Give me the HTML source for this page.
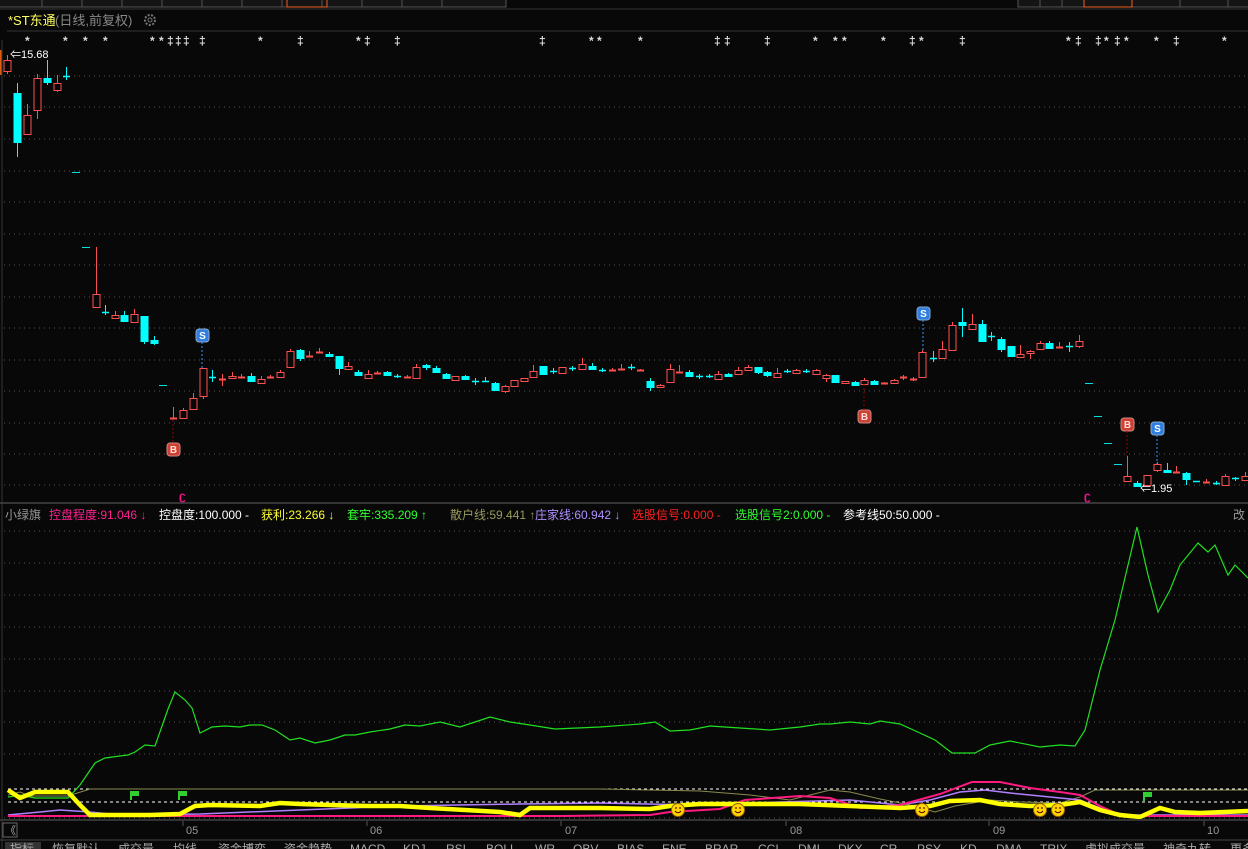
<!DOCTYPE html>
<html><head><meta charset="utf-8"><style>
html,body{margin:0;padding:0;background:#080808;}
body{width:1248px;height:849px;overflow:hidden;position:relative;font-family:"Liberation Sans","Noto Sans CJK SC",sans-serif;}
svg{position:absolute;left:0;top:0;}
</style></head><body>
<svg id="s" width="1248" height="849" xmlns="http://www.w3.org/2000/svg" font-family="Liberation Sans, Noto Sans CJK SC, sans-serif">
<rect width="1248" height="849" fill="#080808"/>
<g stroke="#555" fill="#141414">
<rect x="-2" y="-10" width="44" height="17"/><rect x="42" y="-10" width="40" height="17"/><rect x="82" y="-10" width="40" height="17"/><rect x="122" y="-10" width="40" height="17"/><rect x="162" y="-10" width="40" height="17"/><rect x="202" y="-10" width="40" height="17"/>
<rect x="242" y="-10" width="40" height="17"/><rect x="282" y="-10" width="40" height="17"/><rect x="322" y="-10" width="40" height="17"/><rect x="362" y="-10" width="40" height="17"/><rect x="402" y="-10" width="40" height="17"/><rect x="442" y="-10" width="64" height="17"/>
<rect x="1018" y="-10" width="22" height="17"/><rect x="1040" y="-10" width="22" height="17"/><rect x="1062" y="-10" width="22" height="17"/><rect x="1084" y="-10" width="48" height="17"/><rect x="1132" y="-10" width="48" height="17"/><rect x="1180" y="-10" width="48" height="17"/><rect x="1228" y="-10" width="30" height="17"/>
</g>
<rect x="287" y="-10" width="40" height="17" fill="none" stroke="#f06020"/>
<rect x="1084" y="-10" width="48" height="17" fill="none" stroke="#f06020"/>
<line x1="0" y1="9" x2="1248" y2="9" stroke="#333"/>
<text x="8" y="25" font-size="13" fill="#ffff60">*ST东通</text>
<text x="55" y="25" font-size="13" fill="#888">(日线,前复权)</text>
<circle cx="150" cy="20" r="5" fill="none" stroke="#777" stroke-width="2" stroke-dasharray="2 1.5"/>
<circle cx="150" cy="20" r="2" fill="none" stroke="#777"/>
<line x1="7" y1="31" x2="1248" y2="31" stroke="#333"/>
<rect x="0" y="50" width="2" height="25" fill="#e05a10"/>
<line x1="2" y1="40" x2="2" y2="849" stroke="#333"/>
<g id="grid" stroke="#555" stroke-dasharray="1 4"></g>
<g id="stars" fill="#ddd" font-size="12" font-weight="bold"></g>
<g id="cand"></g>
<text x="10" y="58" font-size="11" fill="#fff">⇐15.68</text>
<text x="1140" y="492" font-size="11" fill="#fff">⇐1.95</text>
<g font-size="10" font-weight="bold" text-anchor="middle">
<rect x="196" y="329" width="13" height="13" rx="3" fill="#2f7fe0" stroke="#8ac"/><text x="202.5" y="339" fill="#fff">S</text>
<line x1="202" y1="342" x2="202" y2="368" stroke="#3a8fff" stroke-dasharray="2 2"/>
<rect x="167" y="443" width="13" height="13" rx="3" fill="#d04030" stroke="#c88"/><text x="173.5" y="453" fill="#fdd">B</text>
<line x1="173" y1="420" x2="173" y2="443" stroke="#900" stroke-dasharray="2 2"/>
<rect x="917" y="307" width="13" height="13" rx="3" fill="#2f7fe0" stroke="#8ac"/><text x="923.5" y="317" fill="#fff">S</text>
<line x1="923" y1="320" x2="923" y2="352" stroke="#3a8fff" stroke-dasharray="2 2"/>
<rect x="858" y="410" width="13" height="13" rx="3" fill="#d04030" stroke="#c88"/><text x="864.5" y="420" fill="#fdd">B</text>
<line x1="864" y1="384" x2="864" y2="410" stroke="#900" stroke-dasharray="2 2"/>
<rect x="1121" y="418" width="13" height="13" rx="3" fill="#d04030" stroke="#c88"/><text x="1127.5" y="428" fill="#fdd">B</text>
<line x1="1127" y1="431" x2="1127" y2="456" stroke="#900" stroke-dasharray="2 2"/>
<rect x="1151" y="422" width="13" height="13" rx="3" fill="#2f7fe0" stroke="#8ac"/><text x="1157.5" y="432" fill="#fff">S</text>
<line x1="1157" y1="435" x2="1157" y2="464" stroke="#3a8fff" stroke-dasharray="2 2"/>
</g>
<text x="179" y="500" font-size="12" font-weight="bold" fill="#ff1090">ʗ</text>
<text x="1084" y="500" font-size="12" font-weight="bold" fill="#ff1090">ʗ</text>
<line x1="0" y1="503" x2="1248" y2="503" stroke="#444" stroke-width="1.5"/>
<text y="519" font-size="12">
<tspan x="5" fill="#999">小绿旗</tspan>
<tspan x="49" fill="#ff2090">控盘程度:91.046 ↓</tspan>
<tspan x="159" fill="#fff">控盘度:100.000 -</tspan>
<tspan x="261" fill="#ffff30">获利:23.266 ↓</tspan>
<tspan x="347" fill="#30ff30">套牢:335.209 ↑</tspan>
<tspan x="450" fill="#9a9a60">散户线:59.441 ↑</tspan>
<tspan x="535" fill="#b090ff">庄家线:60.942 ↓</tspan>
<tspan x="632" fill="#ff2020">选股信号:0.000 -</tspan>
<tspan x="735" fill="#30ff30">选股信号2:0.000 -</tspan>
<tspan x="843" fill="#fff">参考线50:50.000 -</tspan>
<tspan x="1233" fill="#999">改</tspan>
</text>
<g id="grid2" stroke="#555" stroke-dasharray="1 4"></g>
<line x1="8" y1="789" x2="1248" y2="789" stroke="#fff" stroke-dasharray="3 3"/>
<line x1="8" y1="802" x2="1248" y2="802" stroke="#fff" stroke-dasharray="3 3"/>
<polyline fill="none" stroke="#8a8a50" stroke-width="1" points="8,795 20,792 30,796 68,796 90,789 600,789 650,790 700,791 750,795 790,800 830,790 850,792 880,799 910,805 935,812 955,806 990,800 1020,802 1060,803 1080,797 1095,790 1248,790"/>
<polyline fill="none" stroke="#20e020" stroke-width="1.2" points="8,797 20,795 35,798 68,798 80,785 95,763 105,758 120,756 128,755 135,752 145,745 155,746 168,709 175,692 185,700 192,708 200,733 212,727 225,726 240,727 250,725 262,725 275,730 290,740 300,738 315,743 330,740 345,735 355,735 370,732 390,729 405,725 420,726 440,722 460,727 475,722 490,717 510,722 530,725 555,729 600,727 640,724 655,722 670,731 690,730 710,726 740,728 770,730 800,727 820,724 830,724 850,722 870,724 880,721 900,724 920,733 935,740 952,753 975,753 990,745 1010,741 1040,747 1060,745 1075,746 1085,730 1100,670 1115,620 1137,527 1148,575 1158,612 1170,590 1180,565 1198,543 1208,552 1215,545 1228,575 1235,565 1248,578"/>
<polyline fill="none" stroke="#b080ff" stroke-width="1.5" points="8,815 40,812 60,810 90,812 120,815 200,814 300,810 400,806 520,804 600,803 700,805 780,802 850,800 900,805 930,800 960,792 985,790 1010,793 1040,796 1080,800 1110,812 1130,815 1248,815"/>
<polyline fill="none" stroke="#ff1a80" stroke-width="2" points="8,816 300,816 518,816 560,816 650,815 670,812 720,809 745,800 800,796 830,798 860,808 900,805 940,794 972,782 1000,782 1030,788 1060,792 1080,795 1100,806 1120,815 1140,816 1248,816"/>
<polyline fill="none" stroke="#ffff00" stroke-width="4.5" points="8,790 20,798 35,792 68,792 80,805 90,815 130,815 150,815 180,814 195,806 210,805 260,806 280,803 300,804 330,805 370,806 400,806 430,808 500,812 520,815 530,808 600,808 650,809 670,806 700,804 800,804 850,806 900,808 930,806 950,801 980,800 1000,804 1030,806 1060,805 1080,802 1100,810 1120,815 1140,817 1160,808 1175,812 1200,813 1248,811"/>
<g fill="#30d030"><rect x="130" y="791" width="2" height="9"/><rect x="132" y="791" width="7" height="5"/><rect x="178" y="791" width="2" height="9"/><rect x="180" y="791" width="7" height="5"/><rect x="1143" y="792" width="2" height="9"/><rect x="1145" y="792" width="7" height="5"/></g>
<g id="smile"></g>
<line x1="0" y1="820" x2="1248" y2="820" stroke="#333" stroke-width="2"/>
<rect x="3" y="823" width="14" height="14" fill="none" stroke="#666"/>
<text x="5" y="834" font-size="11" fill="#aaa">《</text>
<g font-size="11" fill="#999"><text x="186" y="834">05</text><text x="370" y="834">06</text><text x="565" y="834">07</text><text x="790" y="834">08</text><text x="993" y="834">09</text><text x="1207" y="834">10</text></g>
<g stroke="#555"><line x1="183" y1="821" x2="183" y2="826"/><line x1="367" y1="821" x2="367" y2="826"/><line x1="561" y1="821" x2="561" y2="826"/><line x1="786" y1="821" x2="786" y2="826"/><line x1="989" y1="821" x2="989" y2="826"/><line x1="1204" y1="821" x2="1204" y2="826"/></g>
<line x1="0" y1="840" x2="1248" y2="840" stroke="#444"/>
<rect x="5" y="842" width="36" height="10" fill="#333"/>
<text y="853" font-size="12" fill="#aaa">
<tspan x="10">指标</tspan><tspan x="52">恢复默认</tspan><tspan x="118">成交量</tspan><tspan x="173">均线</tspan><tspan x="218">资金博弈</tspan><tspan x="284">资金趋势</tspan><tspan x="350">MACD</tspan><tspan x="403">KDJ</tspan><tspan x="446">RSI</tspan><tspan x="486">BOLL</tspan><tspan x="535">WR</tspan><tspan x="573">OBV</tspan><tspan x="617">BIAS</tspan><tspan x="662">ENE</tspan><tspan x="705">BRAR</tspan><tspan x="758">CCI</tspan><tspan x="798">DMI</tspan><tspan x="838">DKX</tspan><tspan x="880">CR</tspan><tspan x="917">PSY</tspan><tspan x="960">KD</tspan><tspan x="996">DMA</tspan><tspan x="1040">TRIX</tspan><tspan x="1085">虚拟成交量</tspan><tspan x="1163">神奇九转</tspan><tspan x="1230">更多</tspan>
</text>
</svg>
<script>
var NS="http://www.w3.org/2000/svg";
function el(p,t,a){var e=document.createElementNS(NS,t);for(var k in a)e.setAttribute(k,a[k]);p.appendChild(e);return e;}
var g=document.getElementById('grid');
[76,107,139,171,202,234,265,297,328,360,391,423,454,485].forEach(function(y){el(g,'line',{x1:4,y1:y,x2:1248,y2:y});});
var g2=document.getElementById('grid2');
[531,563,595,627,659,691,722,754,818].forEach(function(y){el(g2,'line',{x1:4,y1:y,x2:1248,y2:y});});
var st=document.getElementById('stars');
[[28,'*'],[66,'*'],[86,'*'],[106,'*'],[153,'*'],[162,'*'],[170,'‡'],[178,'‡'],[186,'‡'],[202,'‡'],[261,'*'],[300,'‡'],[359,'*'],[367,'‡'],[397,'‡'],[542,'‡'],[592,'*'],[600,'*'],[641,'*'],[717,'‡'],[727,'‡'],[767,'‡'],[816,'*'],[836,'*'],[845,'*'],[884,'*'],[912,'‡'],[922,'*'],[962,'‡'],[1069,'*'],[1078,'‡'],[1098,'‡'],[1107,'*'],[1117,'‡'],[1127,'*'],[1157,'*'],[1176,'‡'],[1225,'*']].forEach(function(s){var t=el(st,'text',{x:s[0]-3,y:45});t.textContent=s[1];});
var C=[[7,60,71,55,74,'r'],[17,93,142,83,157,'c'],[27,115,134,104,134,'r'],[37,78,110,74,119,'r'],[47,78,82,60,85,'c'],[57,83,90,75,92,'r'],[66,76,76,67,80,'c'],[76,172,172,172,172,'d'],[86,247,247,247,247,'d'],[96,294,307,247,307,'r'],[105,312,313,305,315,'c'],[115,315,318,311,318,'r'],[124,315,321,311,321,'c'],[134,314,322,309,322,'r'],[144,316,341,316,344,'c'],[154,340,343,336,345,'c'],[163,385,385,385,385,'d'],[173,418,419,407,419,'r'],[183,410,418,408,419,'r'],[193,398,409,393,409,'r'],[203,368,396,368,399,'r'],[212,377,377,370,382,'c'],[222,379,379,374,386,'r'],[232,376,378,372,378,'r'],[241,377,378,374,378,'r'],[251,376,381,373,382,'c'],[261,379,383,376,383,'r'],[270,377,378,375,378,'r'],[280,372,377,370,378,'r'],[290,351,367,349,367,'r'],[300,350,358,349,361,'c'],[309,356,357,351,357,'r'],[319,352,353,348,353,'r'],[329,354,356,352,357,'c'],[339,356,368,356,375,'c'],[348,366,369,362,370,'r'],[358,372,375,370,376,'c'],[368,374,378,370,378,'r'],[377,373,374,371,374,'r'],[387,372,375,371,376,'c'],[397,376,377,374,378,'c'],[407,377,378,375,378,'r'],[416,367,378,364,378,'r'],[426,365,367,364,370,'c'],[436,368,372,366,372,'c'],[446,374,378,373,378,'c'],[455,376,380,376,380,'r'],[465,376,379,375,379,'c'],[475,381,381,378,385,'c'],[485,381,382,377,382,'c'],[495,383,390,382,390,'c'],[505,386,391,385,393,'r'],[514,380,386,380,386,'r'],[524,378,381,378,381,'r'],[533,371,377,365,377,'r'],[543,366,374,366,375,'c'],[553,371,371,368,374,'c'],[562,367,373,367,373,'r'],[572,368,368,366,371,'c'],[582,364,369,358,369,'r'],[592,366,369,363,369,'c'],[602,370,370,368,372,'c'],[612,370,371,368,371,'r'],[621,369,370,364,370,'r'],[631,367,367,364,370,'c'],[640,370,370,369,371,'r'],[650,381,387,378,391,'c'],[660,385,387,384,388,'r'],[670,369,382,364,383,'r'],[679,372,373,365,373,'r'],[689,372,376,370,377,'c'],[699,376,376,374,379,'c'],[709,376,377,374,378,'c'],[718,374,379,371,379,'r'],[728,374,376,373,376,'c'],[738,370,374,367,374,'r'],[748,367,370,365,370,'r'],[758,367,372,367,374,'c'],[767,372,375,371,377,'c'],[777,373,377,368,377,'r'],[787,371,371,369,373,'c'],[796,370,373,369,373,'r'],[806,371,371,369,373,'c'],[816,370,374,369,374,'r'],[826,375,378,374,382,'r'],[835,375,382,375,383,'c'],[845,381,383,381,383,'r'],[855,382,385,381,386,'c'],[864,380,384,378,384,'r'],[874,381,384,380,385,'c'],[884,383,384,382,384,'r'],[894,380,383,379,383,'r'],[903,377,378,375,380,'r'],[913,379,379,377,381,'r'],[922,352,377,350,377,'r'],[933,358,359,351,362,'c'],[942,349,358,341,358,'r'],[952,325,350,322,350,'r'],[962,322,325,308,337,'c'],[972,324,329,314,330,'r'],[982,324,341,320,341,'c'],[991,336,337,332,341,'c'],[1001,339,349,337,352,'c'],[1011,346,356,346,357,'c'],[1020,354,357,345,357,'r'],[1030,351,353,350,359,'r'],[1040,343,349,341,350,'r'],[1049,343,348,341,349,'c'],[1059,347,348,342,348,'r'],[1069,346,346,342,352,'c'],[1079,341,346,335,348,'r'],[1089,383,383,383,383,'d'],[1098,416,416,416,416,'d'],[1108,443,443,443,443,'d'],[1118,464,464,464,464,'d'],[1127,476,481,456,481,'r'],[1137,483,486,481,487,'c'],[1147,475,485,475,486,'r'],[1157,464,470,462,472,'r'],[1167,470,472,463,473,'c'],[1176,472,473,466,473,'r'],[1186,473,479,472,485,'c'],[1196,481,482,481,482,'c'],[1206,482,483,479,483,'r'],[1216,483,483,481,485,'c'],[1225,476,485,474,485,'r'],[1235,478,479,477,481,'c'],[1245,476,480,472,480,'r']];
var cg=document.getElementById('cand');
C.forEach(function(c){var x=c[0],col=c[5]=='r'?'#ff5050':'#00ffff';
 if(c[5]=='d'){el(cg,'line',{x1:x-4,y1:c[1]+.5,x2:x+4,y2:c[1]+.5,stroke:'#00e0e0'});return;}
 el(cg,'line',{x1:x+.5,y1:c[3],x2:x+.5,y2:c[4],stroke:col});
 var h=c[2]-c[1];
 if(h<1.5){el(cg,'line',{x1:x-3,y1:c[1]+.5,x2:x+4,y2:c[1]+.5,stroke:col,'stroke-width':(c[5]=='r'?2:1.5)});}
 else if(c[5]=='r'){el(cg,'rect',{x:x-3,y:c[1]+.5,width:7,height:h,fill:'#080808',stroke:col});}
 else{el(cg,'rect',{x:x-3.5,y:c[1],width:8,height:h+1,fill:col});}
});
var sg=document.getElementById('smile');
[678,738,922,1040,1058].forEach(function(x){var y=810;
 el(sg,'circle',{cx:x,cy:y,r:6.5,fill:'#ffd800',stroke:'#a06000'});
 el(sg,'circle',{cx:x-2,cy:y-2,r:.9,fill:'#600'});el(sg,'circle',{cx:x+2,cy:y-2,r:.9,fill:'#600'});
 el(sg,'path',{d:'M'+(x-3)+' '+(y+1)+' Q'+x+' '+(y+4.5)+' '+(x+3)+' '+(y+1),fill:'none',stroke:'#600'});
});
</script>
</body></html>
